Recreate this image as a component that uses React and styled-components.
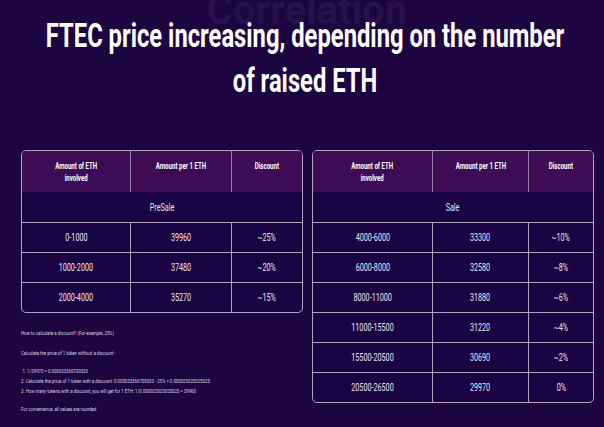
import styled, { createGlobalStyle } from "styled-components";

const GlobalStyle = createGlobalStyle`
	body {
		margin: 0;
		background: #1c0541;
	}
`;

const presale = [
	["0-1000", "39960", "~25%"],
	["1000-2000", "37480", "~20%"],
	["2000-4000", "35270", "~15%"],
];

const sale = [
	["4000-6000", "33300", "~10%"],
	["6000-8000", "32580", "~8%"],
	["8000-11000", "31880", "~6%"],
	["11000-15500", "31220", "~4%"],
	["15500-20500", "30690", "~2%"],
	["20500-26500", "29970", "0%"],
];

const Page = styled.div`
	position: relative;
	width: 604px;
	height: 427px;
	overflow: hidden;
	background: #1c0541;
	font-family: Roboto, "Liberation Sans", sans-serif;
`;

const Ghost = styled.div`
	position: absolute;
	top: -9px;
	left: 0;
	right: 0;
	text-align: center;
	padding-left: 10px;
	font-size: 40px;
	line-height: 40px;
	font-weight: 700;
	color: #26104e;
`;

const Heading = styled.div`
	position: relative;
	display: flex;
	justify-content: center;
	padding-top: 13px;
	padding-left: 6px;
`;

const Title = styled.h1`
	flex: none;
	width: max-content;
	margin: 0;
	font-size: 33px;
	line-height: 45px;
	font-weight: 700;
	color: #ffffff;
	text-align: center;
	white-space: nowrap;
	transform: scaleX(0.72);
`;

const Columns = styled.div`
	display: grid;
	grid-template-columns: 280px 280px;
	column-gap: 11px;
	align-items: start;
	margin-top: 47px;
	padding: 0 12px 0 21px;
`;

const Left = styled.div`
	display: flex;
	flex-direction: column;
`;

const Table = styled.table`
	width: 280px;
	table-layout: fixed;
	border-collapse: separate;
	border-spacing: 0;
	border: 1px solid #aea4c4;
	border-radius: 5px;
	overflow: hidden;
	background: #190342;
`;

const Head = styled.th`
	height: 32px;
	padding: 9px 0 0;
	vertical-align: top;
	background: #3d0c55;
	color: #ffffff;
	font-size: 8.5px;
	line-height: 12px;
	font-weight: 700;
	text-align: center;
	& + & {
		border-left: 1px solid #8f7aa6;
	}
`;

const Row = styled.tr`
	height: 30px;
`;

const Cell = styled.td`
	padding: 0;
	text-align: center;
	vertical-align: middle;
	color: #ebe5f3;
	font-size: 10px;
	font-weight: 400;
	border-top: ${(p) => (p.$first ? "none" : "1px solid #aea4c4")};
	& + & {
		border-left: 1px solid #aea4c4;
	}
`;

const Txt = styled.span`
	display: inline-block;
	white-space: nowrap;
	transform: scaleX(0.72);
`;

const Notes = styled.div`
	margin-top: 15px;
	color: #dcd4e8;
	font-size: 6px;
	line-height: 10px;
	white-space: nowrap;
	transform: scaleX(0.72);
	transform-origin: left center;
`;

const Note = styled.p`
	margin: 0 0 ${(p) => p.$gap || 8}px;
`;

const Step = styled.div`
	padding-left: ${(p) => (p.$indent ? "2px" : "0")};
`;

const PriceTable = ({ label, rows, widths }) => (
	<Table>
		<colgroup>
			{widths.map((w, i) => (
				<col key={i} style={{ width: w }} />
			))}
		</colgroup>
		<thead>
			<tr>
				<Head>
					<Txt>
						Amount of ETH
						<br />
						involved
					</Txt>
				</Head>
				<Head>
					<Txt>Amount per 1 ETH</Txt>
				</Head>
				<Head>
					<Txt>Discount</Txt>
				</Head>
			</tr>
		</thead>
		<tbody>
			<Row>
				<Cell colSpan={3} $first>
					<Txt>{label}</Txt>
				</Cell>
			</Row>
			{rows.map((r) => (
				<Row key={r[0]}>
					{r.map((v, i) => (
						<Cell key={i}>
							<Txt>{v}</Txt>
						</Cell>
					))}
				</Row>
			))}
		</tbody>
	</Table>
);

const App = () => {
	return (
		<Page>
			<GlobalStyle />
			<Ghost>Correlation</Ghost>
			<Heading>
				<Title>
					FTEC price increasing, depending on the number
					<br />
					of raised ETH
				</Title>
			</Heading>
			<Columns>
				<Left>
					<PriceTable label="PreSale" rows={presale} widths={[108, 101, 71]} />
					<Notes>
						<Note $gap={10}>How to calculate a discount? (For example, 25%)</Note>
						<Note>Calculate the price of 1 token without a discount :</Note>
						<Note>
							<Step $indent>1. 1/29970 = 0.000033366700033</Step>
							<Step>
								2. Calculate the price of 1 token with a discount: 0.000033366700033 - 25% =
								0.000025025025025
							</Step>
							<Step>
								3. How many tokens with a discount, you will get for 1 ETH: 1/0.000025025025025
								= 39960
							</Step>
						</Note>
						<Note>For convenience, all values are rounded.</Note>
					</Notes>
				</Left>
				<PriceTable label="Sale" rows={sale} widths={[119, 96, 65]} />
			</Columns>
		</Page>
	);
};

export default App;
